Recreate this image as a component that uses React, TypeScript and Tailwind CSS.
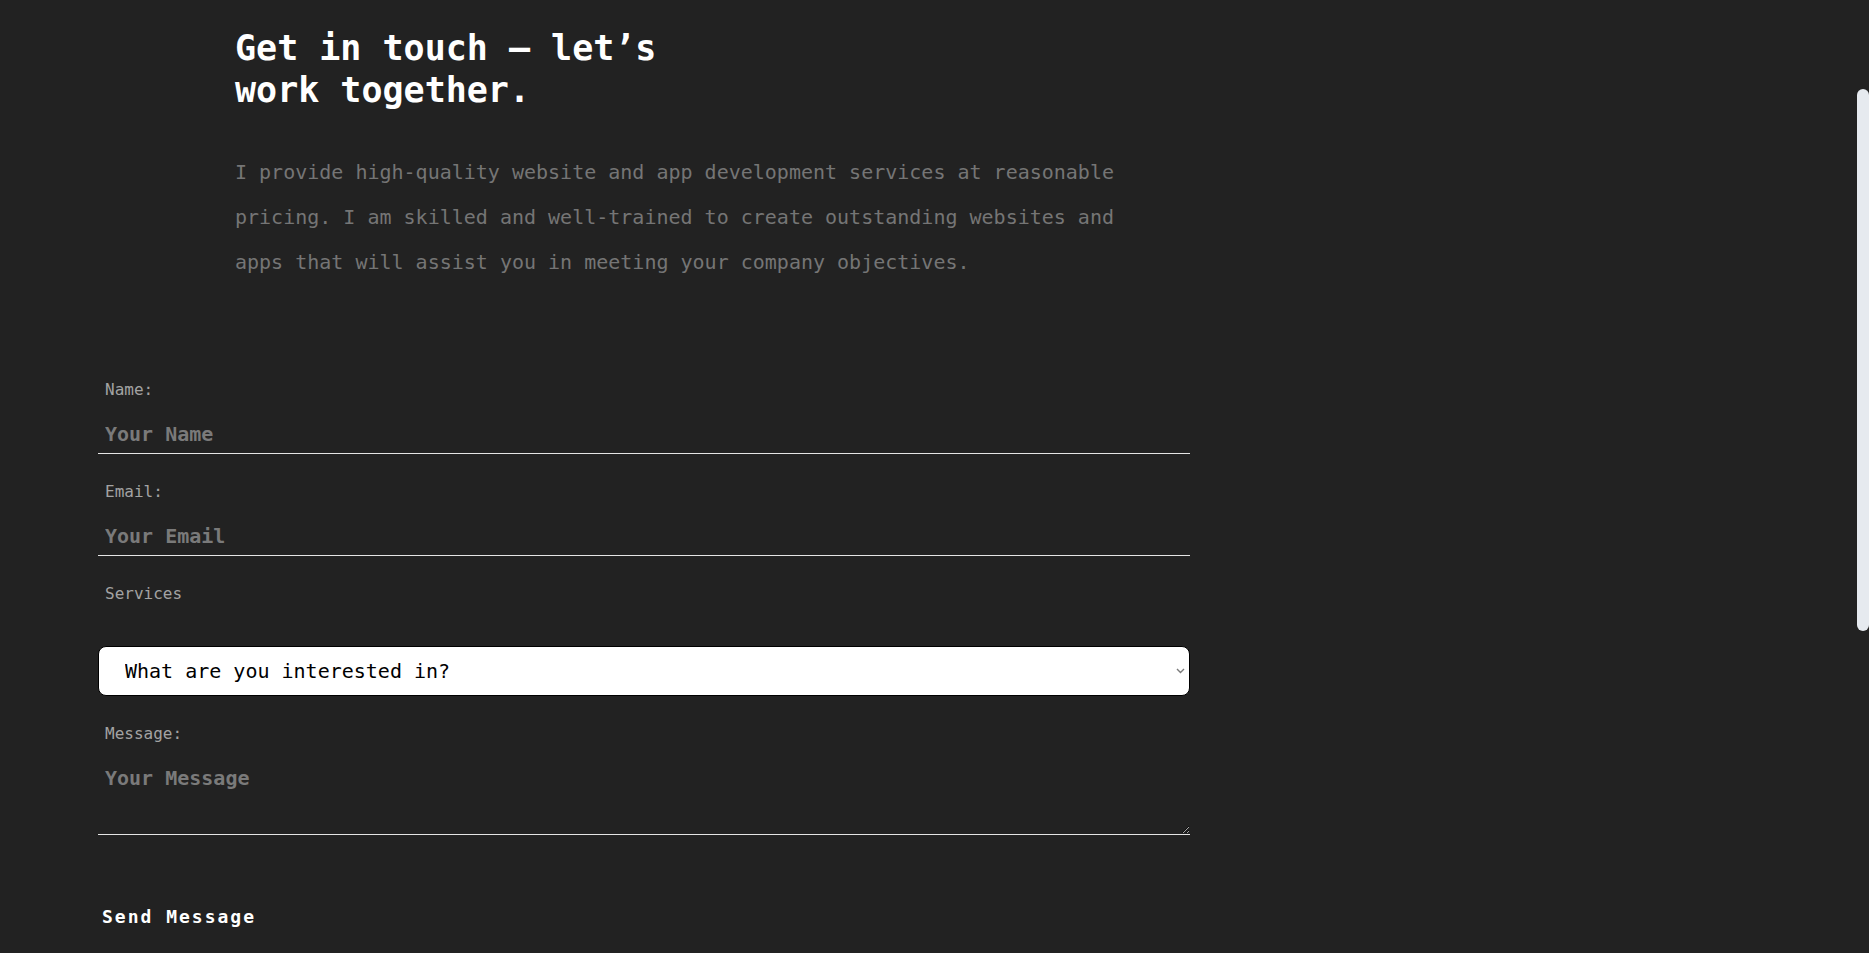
import React from "react";

const mono = { fontFamily: '"DejaVu Sans Mono", "Liberation Mono", monospace' };

function Field({ label, placeholder, type }: { label: string; placeholder: string; type: string }) {
  return (
    <div className="flex flex-col">
      <label className="pl-[7px] text-[16px] leading-6 text-[#a3a3a3]">{label}</label>
      <input
        type={type}
        placeholder={placeholder}
        className="mt-3 h-[40px] w-full border-b border-[#e5e5e5] bg-transparent px-[7px] text-[20px] font-bold text-white outline-none placeholder:text-[#7a7a7a]"
      />
    </div>
  );
}

export default function App() {
  return (
    <div className="relative h-[953px] overflow-hidden bg-[#222222]" style={mono}>
      <div className="flex flex-col pt-[27px]">
        <div className="pl-[235px]">
          <h1 className="text-[35px] font-bold leading-[42px] text-white">
            Get in touch — let’s
            <br />
            work together.
          </h1>
          <p className="mt-[39px] w-[900px] text-[20px] font-light leading-[45px] text-[#757575]">
            I provide high-quality website and app development services at reasonable pricing. I am
            skilled and well-trained to create outstanding websites and apps that will assist you in
            meeting your company objectives.
          </p>
        </div>

        <form className="mt-[93px] ml-[98px] flex w-[1092px] flex-col gap-[26px]">
          <Field label="Name:" placeholder="Your Name" type="text" />
          <Field label="Email:" placeholder="Your Email" type="email" />
          <div className="flex flex-col">
            <label className="pl-[7px] text-[16px] leading-6 text-[#a3a3a3]">Services</label>
            <div className="relative mt-[40px]">
              <select className="h-[50px] w-full appearance-none rounded-lg border border-black bg-white pl-[26px] pr-6 text-[20px] text-black outline-none">
                <option>What are you interested in?</option>
                <option>Website Development</option>
                <option>App Development</option>
              </select>
              <svg
                className="pointer-events-none absolute right-[5px] top-[22px]"
                width="9"
                height="6"
                viewBox="0 0 9 6"
                fill="none"
              >
                <path d="M1 1l3.5 3.5L8 1" stroke="#7a7a7a" strokeWidth="1.4" />
              </svg>
            </div>
          </div>
          <div className="flex flex-col">
            <label className="pl-[7px] text-[16px] leading-6 text-[#a3a3a3]">Message:</label>
            <textarea
              placeholder="Your Message"
              className="mt-[10px] h-[79px] w-full border-b border-[#e5e5e5] bg-transparent px-[7px] pt-[7px] text-[20px] font-bold text-white outline-none placeholder:text-[#7a7a7a]"
            />
          </div>
          <div className="mt-[42px]">
            <button type="button" className="pl-1 text-[18px] font-bold tracking-[2px] text-white">
              Send Message
            </button>
          </div>
        </form>
      </div>
      <div className="absolute right-0 top-[89px] h-[542px] w-[12px] rounded-full bg-[#e6eaef]" />
    </div>
  );
}
